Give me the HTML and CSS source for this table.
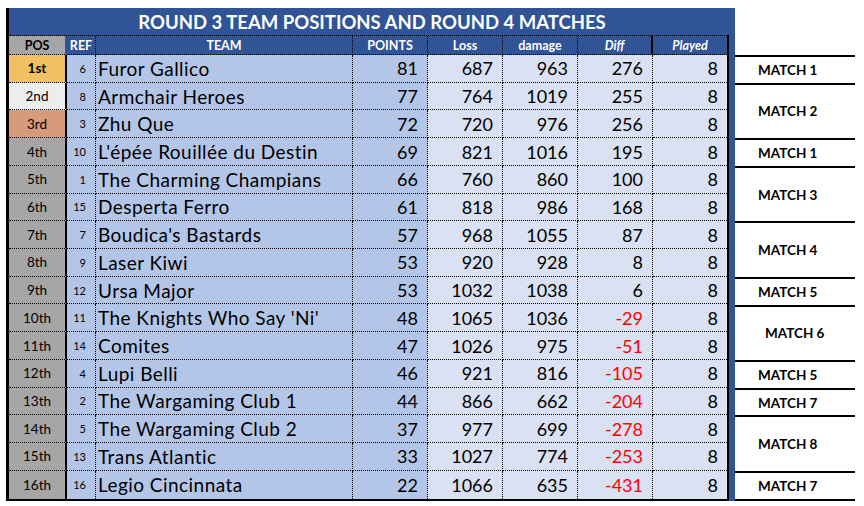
FILE: index.html
```html
<!DOCTYPE html>
<html>
<head>
<meta charset="utf-8">
<link rel="stylesheet" href="styles.css">
</head>
<body>
<div class="sheet">
  <div class="board">
    <div class="title">ROUND 3 TEAM POSITIONS AND ROUND 4 MATCHES</div>
    <div class="table">
      <div class="row head">
        <div class="c pos">POS</div>
        <div class="c ref">REF</div>
        <div class="c team">TEAM</div>
        <div class="c num">POINTS</div>
        <div class="c num">Loss</div>
        <div class="c num">damage</div>
        <div class="c num it diffh">Diff</div>
        <div class="c num it last">Played</div>
      </div>
      <div class="row"><div class="c pos gold b">1st</div><div class="c ref">6</div><div class="c team">Furor Gallico</div><div class="c num pts">81</div><div class="c num">687</div><div class="c num">963</div><div class="c num">276</div><div class="c num last">8</div></div>
      <div class="row"><div class="c pos silver">2nd</div><div class="c ref">8</div><div class="c team">Armchair Heroes</div><div class="c num pts">77</div><div class="c num">764</div><div class="c num">1019</div><div class="c num">255</div><div class="c num last">8</div></div>
      <div class="row"><div class="c pos bronze">3rd</div><div class="c ref">3</div><div class="c team">Zhu Que</div><div class="c num pts">72</div><div class="c num">720</div><div class="c num">976</div><div class="c num">256</div><div class="c num last">8</div></div>
      <div class="row"><div class="c pos">4th</div><div class="c ref">10</div><div class="c team">L'épée Rouillée du Destin</div><div class="c num pts">69</div><div class="c num">821</div><div class="c num">1016</div><div class="c num">195</div><div class="c num last">8</div></div>
      <div class="row"><div class="c pos">5th</div><div class="c ref">1</div><div class="c team">The Charming Champians</div><div class="c num pts">66</div><div class="c num">760</div><div class="c num">860</div><div class="c num">100</div><div class="c num last">8</div></div>
      <div class="row"><div class="c pos">6th</div><div class="c ref">15</div><div class="c team">Desperta Ferro</div><div class="c num pts">61</div><div class="c num">818</div><div class="c num">986</div><div class="c num">168</div><div class="c num last">8</div></div>
      <div class="row"><div class="c pos">7th</div><div class="c ref">7</div><div class="c team">Boudica's Bastards</div><div class="c num pts">57</div><div class="c num">968</div><div class="c num">1055</div><div class="c num">87</div><div class="c num last">8</div></div>
      <div class="row"><div class="c pos">8th</div><div class="c ref">9</div><div class="c team">Laser Kiwi</div><div class="c num pts">53</div><div class="c num">920</div><div class="c num">928</div><div class="c num">8</div><div class="c num last">8</div></div>
      <div class="row"><div class="c pos">9th</div><div class="c ref">12</div><div class="c team">Ursa Major</div><div class="c num pts">53</div><div class="c num">1032</div><div class="c num">1038</div><div class="c num">6</div><div class="c num last">8</div></div>
      <div class="row"><div class="c pos">10th</div><div class="c ref">11</div><div class="c team">The Knights Who Say 'Ni'</div><div class="c num pts">48</div><div class="c num">1065</div><div class="c num">1036</div><div class="c num neg">-29</div><div class="c num last">8</div></div>
      <div class="row"><div class="c pos">11th</div><div class="c ref">14</div><div class="c team">Comites</div><div class="c num pts">47</div><div class="c num">1026</div><div class="c num">975</div><div class="c num neg">-51</div><div class="c num last">8</div></div>
      <div class="row"><div class="c pos">12th</div><div class="c ref">4</div><div class="c team">Lupi Belli</div><div class="c num pts">46</div><div class="c num">921</div><div class="c num">816</div><div class="c num neg">-105</div><div class="c num last">8</div></div>
      <div class="row"><div class="c pos">13th</div><div class="c ref">2</div><div class="c team">The Wargaming Club 1</div><div class="c num pts">44</div><div class="c num">866</div><div class="c num">662</div><div class="c num neg">-204</div><div class="c num last">8</div></div>
      <div class="row"><div class="c pos">14th</div><div class="c ref">5</div><div class="c team">The Wargaming Club 2</div><div class="c num pts">37</div><div class="c num">977</div><div class="c num">699</div><div class="c num neg">-278</div><div class="c num last">8</div></div>
      <div class="row"><div class="c pos">15th</div><div class="c ref">13</div><div class="c team">Trans Atlantic</div><div class="c num pts">33</div><div class="c num">1027</div><div class="c num">774</div><div class="c num neg">-253</div><div class="c num last">8</div></div>
      <div class="row end"><div class="c pos">16th</div><div class="c ref">16</div><div class="c team">Legio Cincinnata</div><div class="c num pts">22</div><div class="c num">1066</div><div class="c num">635</div><div class="c num neg">-431</div><div class="c num last">8</div></div>
    </div>
  </div>
  <div class="matches">
    <div class="m first s1">MATCH 1</div>
    <div class="m s2">MATCH 2</div>
    <div class="m s1">MATCH 1</div>
    <div class="m s2">MATCH 3</div>
    <div class="m s2">MATCH 4</div>
    <div class="m s1">MATCH 5</div>
    <div class="m s2 indent">MATCH 6</div>
    <div class="m s1">MATCH 5</div>
    <div class="m s1">MATCH 7</div>
    <div class="m s2">MATCH 8</div>
    <div class="m s1">MATCH 7</div>
  </div>
</div>
</body>
</html>
```
FILE: styles.css
```css
* { box-sizing: border-box; }
body {
  margin: 0;
  background: #fff;
  font-family: Lato, "Open Sans", sans-serif;
  color: #000;
}
.sheet {
  display: flex;
  align-items: flex-start;
  margin: 8px 0 0 6px;
}
.board {
  width: 729px;
  border-left: 3px solid #000;
  background: #305496;
}
.title {
  height: 27px;
  color: #fff;
  font-weight: 700;
  font-size: 18.5px;
  text-align: center;
  line-height: 28px;
}
.table {
  margin-right: 6px;
  border-right: 2px solid #000;
  border-bottom: 2px solid #000;
}
.row {
  display: grid;
  grid-template-columns: 58px 29px 257px 75px 75px 75px 75px 74px;
  height: 27.73px;
  background: #d9e1f2;
}
.row.head {
  height: 20px;
  background: #305496;
  border-top: 1px dotted #000;
}
.c {
  display: flex;
  align-items: center;
  border-right: 1px dotted #000;
  border-bottom: 1px dotted #000;
  font-size: 18px;
  white-space: nowrap;
  overflow: hidden;
}
.row.end .c { border-bottom: none; }
.c.last { border-right: none; }
.pos {
  justify-content: center;
  background: #a6a6a6;
  font-size: 13.5px;
  border-right: 2px solid #000;
}
.pos.gold { background: #f0c062; }
.pos.silver { background: #ededed; }
.pos.bronze { background: #d79b7b; }
.b { font-weight: 700; }
.ref {
  justify-content: flex-end;
  padding-right: 9px;
  font-size: 11px;
  background: #b4c6e7;
}
.team {
  padding-left: 2px;
  background: #b4c6e7;
  font-size: 19px;
  letter-spacing: 0.45px;
}
.num {
  justify-content: flex-end;
  padding-right: 9px;
}
.num.pts { background: #b4c6e7; }
.neg { color: #ff0000; }
.head .c {
  color: #fff;
  font-weight: 700;
  font-size: 12.5px;
  letter-spacing: 0;
  background: #305496;
  justify-content: center;
  padding: 0;
}
.head .pos {
  color: #000;
  background: #a6a6a6;
  border-right: 2px solid #305496;
}
.head .ref { justify-content: center; }
.head .it { font-style: italic; }
.head .diffh { border-right: 2px solid #000; }
.matches {
  width: 120px;
  margin-top: 47px;
  display: flex;
  flex-direction: column;
}
.m {
  display: flex;
  align-items: center;
  padding-left: 23px;
  border-bottom: 2px solid #000;
  font-weight: 700;
  font-size: 13.5px;
}
.m.first { border-top: 2px solid #000; }
.m.s1 { height: 27.73px; }
.m.s1.first { height: 29.73px; }
.m.s2 { height: 55.46px; }
.m.indent { padding-left: 30px; }
```
